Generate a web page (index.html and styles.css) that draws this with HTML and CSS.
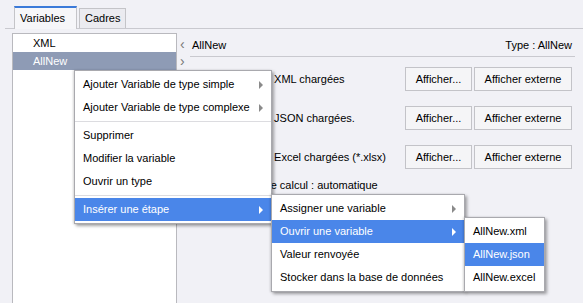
FILE: index.html
```html
<!DOCTYPE html>
<html>
  <head>
    <title>Variables</title>
    <link rel="stylesheet" href="styles.css">
  </head>
  <body>
    <div class="tabs">
      <div class="tab active">Variables</div>
      <div class="tab">Cadres</div>
    </div>
    <main class="main">
      <ul class="tree">
        <li class="tree-item">XML</li>
        <li class="tree-item selected">AllNew</li>
      </ul>
      <div class="nav">
        <span class="chev">&lsaquo;</span>
        <span class="chev">&rsaquo;</span>
      </div>
      <section class="pane">
        <div class="pane-head">
          <span>AllNew</span>
          <span>Type : AllNew</span>
        </div>
        <div class="row">
          <span class="label">Variables XML chargées</span>
          <button class="btn btn-short">Afficher...</button>
          <button class="btn btn-long">Afficher externe</button>
        </div>
        <div class="row">
          <span class="label">Variables JSON chargées.</span>
          <button class="btn btn-short">Afficher...</button>
          <button class="btn btn-long">Afficher externe</button>
        </div>
        <div class="row">
          <span class="label">Variables Excel chargées (*.xlsx)</span>
          <button class="btn btn-short">Afficher...</button>
          <button class="btn btn-long">Afficher externe</button>
        </div>
        <div class="mode">Mode de calcul : automatique</div>
      </section>
    </main>

    <!-- context menus -->
    <ul class="menu menu-main">
      <li class="menu-item has-sub">Ajouter Variable de type simple</li>
      <li class="menu-item has-sub">Ajouter Variable de type complexe</li>
      <li class="menu-sep"></li>
      <li class="menu-item">Supprimer</li>
      <li class="menu-item">Modifier la variable</li>
      <li class="menu-item">Ouvrir un type</li>
      <li class="menu-sep"></li>
      <li class="menu-item has-sub active">Insérer une étape</li>
    </ul>
    <ul class="menu menu-step">
      <li class="menu-item has-sub">Assigner une variable</li>
      <li class="menu-item has-sub active">Ouvrir une variable</li>
      <li class="menu-item">Valeur renvoyée</li>
      <li class="menu-item">Stocker dans la base de données</li>
    </ul>
    <ul class="menu menu-files">
      <li class="menu-item">AllNew.xml</li>
      <li class="menu-item active">AllNew.json</li>
      <li class="menu-item">AllNew.excel</li>
    </ul>
  </body>
</html>
```

FILE: styles.css
```css
html, body {
  height: 100%;
}

body {
  margin: 0;
  background: #f1f1f6;
  font-family: "Liberation Sans", Arial, sans-serif;
  font-size: 11px;
  color: #000;
  overflow: hidden;
  display: flex;
  flex-direction: column;
}

.tabs {
  display: flex;
  align-items: flex-end;
  gap: 2px;
  margin-left: 5px;
  padding: 6px 0 0 9px;
  height: 22px;
  border-bottom: 1px solid #c9c9cf;
}

.tab {
  box-sizing: border-box;
  height: 20px;
  padding: 0 5px;
  line-height: 19px;
  border: 1px solid #c4c4c8;
  border-bottom: none;
  background: #ebebf0;
}

.tab.active {
  height: 22px;
  width: 63px;
  border-top: 2px solid #3b7ad9;
  background: #f6f6f9;
  line-height: 20px;
  margin-bottom: -1px;
  height: 23px;
}

.main {
  flex: 1;
  display: flex;
  padding-top: 4px;
}

.tree {
  list-style: none;
  margin: 0 0 0 12px;
  padding: 0;
  width: 163px;
  background: #fff;
  border: 1px solid #b9b9be;
  border-bottom: none;
}

.tree-item {
  height: 18px;
  line-height: 18px;
  padding-left: 20px;
}

.tree-item.selected {
  background: #8e9bb5;
  color: #fff;
}

.nav {
  display: flex;
  flex-direction: column;
  width: 12px;
  padding: 3px 0 0 1px;
  color: #777;
  font-size: 14px;
}

.chev {
  height: 17px;
  line-height: 17px;
  padding-left: 2px;
}

.pane {
  flex: 1;
  margin-right: 8px;
}

.pane-head {
  display: flex;
  justify-content: space-between;
  align-items: center;
  height: 23px;
  padding: 0 3px 0 2px;
  border-bottom: 1px solid #c9c9cf;
}

.row {
  display: flex;
  align-items: center;
  gap: 2px;
  height: 24px;
  margin-top: 10px;
  padding-right: 3px;
}

.row + .row {
  margin-top: 15px;
}

.label {
  flex: 1;
  padding-left: 36px;
  white-space: nowrap;
}

.btn {
  box-sizing: border-box;
  height: 24px;
  padding: 0;
  font: inherit;
  color: #000;
  background: #f5f5f7;
  border: 1px solid #c3c3c8;
}

.btn-short {
  width: 67px;
}

.btn-long {
  width: 98px;
}

.mode {
  margin-top: 9px;
  padding-left: 44px;
  height: 14px;
  line-height: 14px;
}

/* context menus */
.menu {
  position: absolute;
  list-style: none;
  margin: 0;
  padding: 2px 0;
  box-sizing: border-box;
  background: #fff;
  border: 1px solid #a9a9ae;
  box-shadow: 2px 2px 3px rgba(0, 0, 0, 0.35), -1px 0 2px rgba(0, 0, 0, 0.15);
}

.menu-main {
  left: 74px;
  top: 70px;
  width: 198px;
}

.menu-step {
  left: 271px;
  top: 194px;
  width: 194px;
}

.menu-files {
  left: 464px;
  top: 217px;
  width: 81px;
}

.menu-item {
  position: relative;
  height: 23px;
  line-height: 23px;
  padding: 0 8px;
  white-space: nowrap;
}

.menu-item.active {
  background: #4a86e9;
  color: #fff;
}

.has-sub::after {
  content: "";
  position: absolute;
  right: 8px;
  top: 8px;
  border-style: solid;
  border-width: 4px 0 4px 4px;
  border-color: transparent transparent transparent #8a8a8a;
}

.has-sub.active::after {
  border-left-color: #fff;
}

.menu-sep {
  height: 5px;
  position: relative;
}

.menu-sep::before {
  content: "";
  position: absolute;
  left: 0;
  right: 0;
  top: 2px;
  border-top: 1px solid #dcdce0;
}
```
